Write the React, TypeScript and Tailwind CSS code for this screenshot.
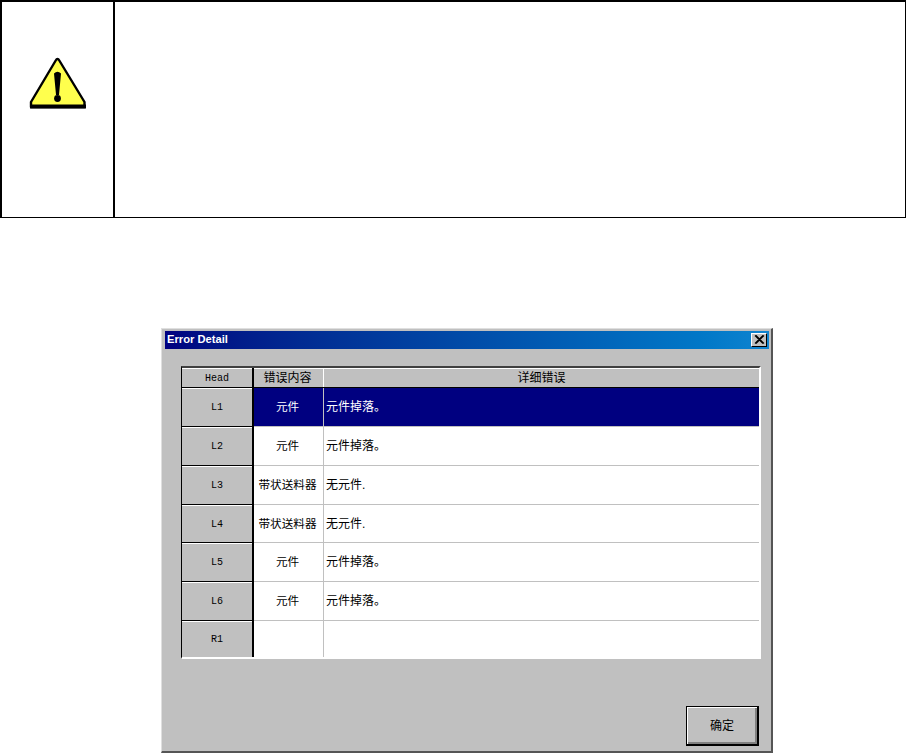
const rows = [
  { head: 'L1', type: '元件', detail: '元件掉落。', selected: true, height: 'h-[39px]' },
  { head: 'L2', type: '元件', detail: '元件掉落。', height: 'h-[39px]' },
  { head: 'L3', type: '带状送料器', detail: '无元件.', height: 'h-[39px]' },
  { head: 'L4', type: '带状送料器', detail: '无元件.', height: 'h-[38px]' },
  { head: 'L5', type: '元件', detail: '元件掉落。', height: 'h-[39px]' },
  { head: 'L6', type: '元件', detail: '元件掉落。', height: 'h-[39px]' },
]

const cjk = "font-['Liberation_Sans','Noto_Sans_CJK_SC',sans-serif]"

const WarningIcon = () => (
  <svg width="58" height="52" viewBox="0 0 58 52">
    <path d="M28.5 2 Q29.5 2 30 3 L55.5 45 V50 H2 V45 L27 3 Q27.5 2 28.5 2 Z" fill="#ffff4d" stroke="#000" strokeWidth="2.4" strokeLinejoin="round" />
    <path d="M1 47.5 H57 V51.5 H1 Z" fill="#000" />
    <path d="M25 16.5 Q28.5 13 32 16.5 L30 38 H27 Z" fill="#000" />
    <circle cx="28.5" cy="41.5" r="3.4" fill="#000" />
  </svg>
)

const CloseIcon = () => (
  <svg width="14" height="12" viewBox="0 0 14 12">
    <path d="M3 1.5 L11 9.5 M4 1.5 L12 9.5 M11 1.5 L3 9.5 M12 1.5 L4 9.5" stroke="#000" strokeWidth="1.1" fill="none" />
  </svg>
)

const Row = ({ head, type, detail, selected, last, height }: { head: string; type: string; detail: string; selected?: boolean; last?: boolean; height: string }) => (
  <div className={`flex ${height}`}>
    <div className={`w-[70px] flex items-center justify-center bg-[#c0c0c0] border-t border-t-white font-['Liberation_Mono',monospace] text-[10px] text-black ${last ? '' : 'border-b border-b-black'}`}>
      {head}
    </div>
    <div className="w-[2px] bg-black" />
    <div className={`w-[69px] flex items-center justify-center pr-[2px] text-[11.6px] ${cjk} ${selected ? 'bg-[#000080] text-white' : 'bg-white text-black'} ${last ? '' : 'border-b border-b-[#c0c0c0]'}`}>
      {type}
    </div>
    <div className="w-px bg-[#c0c0c0]" />
    <div className={`flex-1 flex items-center pl-[2px] text-[12px] ${cjk} ${selected ? 'bg-[#000080] text-white' : 'bg-white text-black'} ${last ? '' : 'border-b border-b-[#c0c0c0]'}`}>
      {detail}
    </div>
  </div>
)

export default function App() {
  return (
    <div className="w-[906px] h-[754px] bg-white overflow-hidden">
      <div className="flex w-[906px] h-[218px] border-2 border-black border-b border-r">
        <div className="w-[111px] flex items-center justify-center pb-[53px]">
          <WarningIcon />
        </div>
        <div className="w-[2px] bg-black" />
        <div className="flex-1" />
      </div>

      <div className="ml-[161px] mt-[110px] w-[612px] h-[425px] flex flex-col bg-[#c0c0c0] border-t-[1px] border-l-[1px] border-t-[#dfdfdf] border-l-[#dfdfdf] border-r-2 border-b-2 border-r-[#555555] border-b-[#555555] p-[2px]">
        <div className="h-[18px] flex items-center justify-between bg-gradient-to-r from-[#000080] to-[#1084d0] pl-[2px] pr-[2px] ml-px">
          <span className="font-['Liberation_Sans',sans-serif] font-bold text-[11.2px] leading-none text-white">Error Detail</span>
          <div className="w-[16px] h-[14px] flex items-center justify-center bg-[#c0c0c0] border border-t-white border-l-white border-r-black border-b-black">
            <CloseIcon />
          </div>
        </div>

        <div className="ml-[17px] mt-[17px] w-[580px] border-t-[#404040] border-t-2 border-l border-l-black border-r-2 border-r-white border-b-2 border-b-white">
          <div className="flex h-[20px] border-b border-b-black bg-[#c0c0c0]">
            <div className="w-[70px] flex items-center justify-center border-t border-t-white font-['Liberation_Mono',monospace] text-[10px] text-black">Head</div>
            <div className="w-[2px] bg-black" />
            <div className={`w-[69px] flex items-center justify-center pr-[2px] border-t border-t-white text-[12px] ${cjk} text-black`}>错误内容</div>
            <div className="w-px bg-white" />
            <div className={`flex-1 flex items-center justify-center border-t border-t-white text-[12px] ${cjk} text-black`}>详细错误</div>
          </div>
          {rows.map((r) => (
            <Row key={r.head} {...r} />
          ))}
          <Row head="R1" type="" detail="" last height="h-[36px]" />
        </div>

        <div className="mt-[47px] flex justify-end pr-[10px]">
          <button className={`w-[73px] h-[40px] flex items-center justify-center bg-[#c0c0c0] border border-black shadow-[inset_1px_1px_0_#ffffff,inset_-2px_-2px_0_#808080] border-r-2 border-b-2 text-[12px] ${cjk} text-black`}>
            确定
          </button>
        </div>
      </div>
    </div>
  )
}
